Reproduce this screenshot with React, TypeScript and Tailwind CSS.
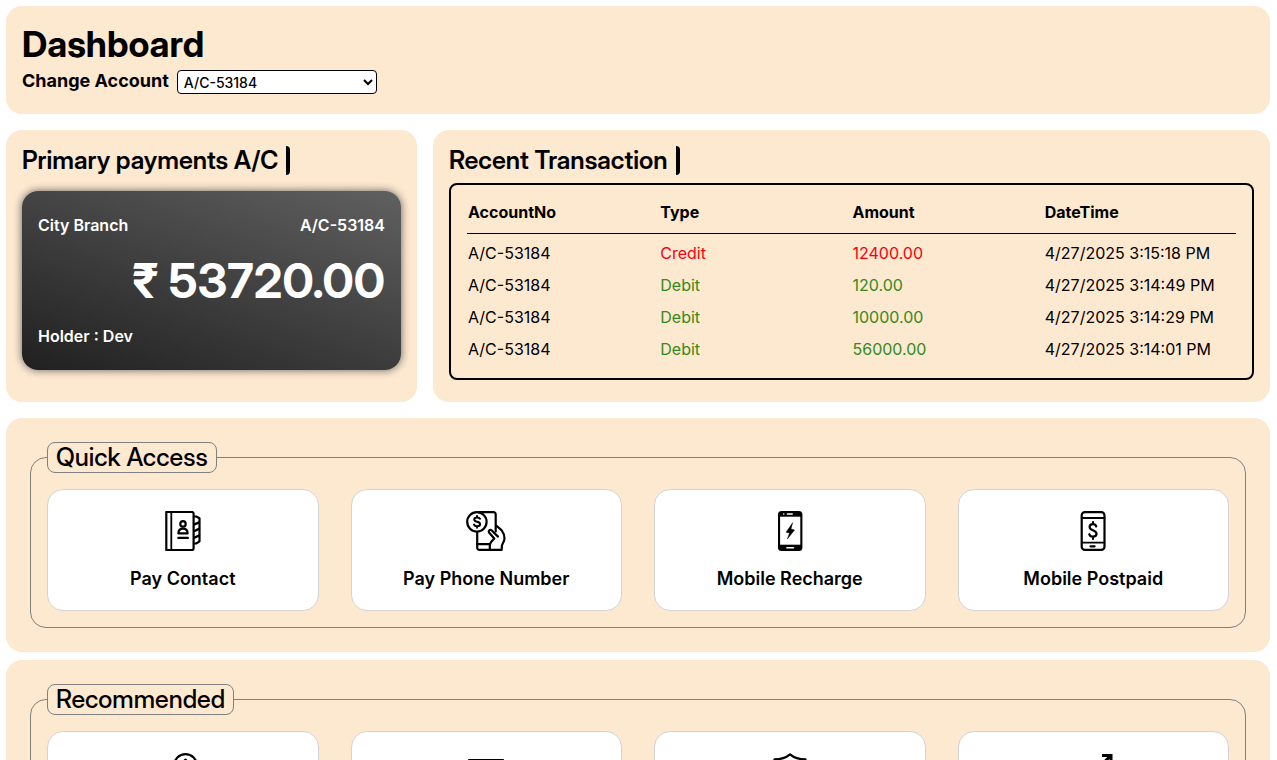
import type { ReactNode } from "react";

type Transaction = { account: string; type: "Credit" | "Debit"; amount: string; date: string };

const transactions: Transaction[] = [
  { account: "A/C-53184", type: "Credit", amount: "12400.00", date: "4/27/2025 3:15:18 PM" },
  { account: "A/C-53184", type: "Debit", amount: "120.00", date: "4/27/2025 3:14:49 PM" },
  { account: "A/C-53184", type: "Debit", amount: "10000.00", date: "4/27/2025 3:14:29 PM" },
  { account: "A/C-53184", type: "Debit", amount: "56000.00", date: "4/27/2025 3:14:01 PM" },
];

function Icon({ children }: { children: ReactNode }) {
  return (
    <svg
      viewBox="0 0 40 40"
      className="size-10"
      fill="none"
      stroke="#000"
      strokeWidth="2.2"
      strokeLinecap="round"
      strokeLinejoin="round"
      aria-hidden="true"
    >
      {children}
    </svg>
  );
}

const ContactBook = () => (
  <Icon>
    <path d="M3.3 1h25.5a1.8 1.8 0 0 1 1.8 1.8v34.4a1.8 1.8 0 0 1-1.8 1.8H3.3z" />
    <path d="M8.3 1v38" strokeWidth="1.8" />
    <path d="M31 5.5h2.2l3.3 1.8v23l-3.3 2.2H31" />
    <path d="M31.5 13.3l4.5-2M31.5 20l4.5-2.2M31.5 26.7l4.5-2.2" strokeWidth="2.4" />
    <circle cx="20" cy="12.9" r="2.7" />
    <path d="M15.4 22.4c0-3 2-4.7 4.6-4.7s4.6 1.7 4.6 4.7z" />
    <path d="M15.3 26.9h9.6" />
  </Icon>
);

const PayPhone = () => (
  <Icon>
    <circle cx="10.9" cy="10.8" r="9.7" />
    <path d="M14 7.8c-.5-1-1.6-1.4-3-1.4-1.7 0-2.8.8-2.8 2.1 0 3 5.9 1.5 5.9 4.6 0 1.4-1.3 2.2-3 2.2-1.6 0-2.7-.6-3.1-1.7M11 4.9v1.5M11 15.3v1.5" strokeWidth="2" />
    <path d="M13 1.2h14.5a2.2 2.2 0 0 1 2.2 2.2v17M11.2 21.8v14.9a2.2 2.2 0 0 0 2.3 2.2h22.2l.2-4c.2-2 2.6-4.6 2.6-7.5 0-3-1-5.6-2.8-8L29.7 14" />
    <path d="M11.2 33.2h13M32 25.6l-6.5-6.3c-1.4-1.3-3.6.5-2.5 2.2l5.3 6-3 3.3c-1.2 1.4-1.5 2.8-1.5 4.2V38.5" />
  </Icon>
);

const Recharge = () => (
  <Icon>
    <rect x="8" y="0" width="24.4" height="40" rx="3.5" fill="#000" stroke="none" />
    <path d="M10.1 5.7h20.2v28H10.1z" fill="#fff" stroke="none" />
    <path d="M17.4 3.1h4.8M13.7 3.1h.1M16.9 36.8h6.6" stroke="#fff" strokeWidth="1.5" />
    <path d="M22.5 12l-6.4 9.2 3.5.8-2.2 5.9 7.1-8.9-3.4-1z" fill="#000" strokeWidth="0.5" />
  </Icon>
);

const Postpaid = () => (
  <Icon>
    <rect x="8.7" y="1.1" width="22.8" height="37.8" rx="3.2" />
    <path d="M8.7 7h22.8M8.7 31.6h22.8" strokeWidth="1.8" />
    <path d="M17.4 35.3h4.2" />
    <path d="M23.2 15.4c-.4-1.6-1.6-2.3-3.3-2.3-2 0-3.3 1-3.3 2.8 0 4.1 6.9 2.5 6.9 6.9 0 1.8-1.5 2.9-3.6 2.9-1.9 0-3.2-.9-3.6-2.5M20 11v2M20 25.7v2.2" />
  </Icon>
);

const Coin = () => (
  <Icon>
    <circle cx="22.5" cy="12.7" r="11.5" />
    <path d="M22.5 6.5v12M19.5 9.5l3-3 3 3" strokeWidth="2" />
    <path d="M4 28v10.5h27l5-8" />
  </Icon>
);

const Bank = () => (
  <Icon>
    <rect x="2.8" y="6.8" width="34.4" height="26" strokeWidth="1.6" />
    <path d="M3 14h34M8 26h8" />
  </Icon>
);

const Shield = () => (
  <Icon>
    <path d="M20 1.4c-4.5 3.8-9.5 5-15.5 5V19c0 9 6 16 15.5 20 9.5-4 15.5-11 15.5-20V6.4c-6 0-11-1.2-15.5-5z" />
    <path d="M13 20l5 5 9-10" />
  </Icon>
);

const Growth = () => (
  <Icon>
    <path d="M29 2.5h9V11M37.5 3L24 16l-6-5L4 25" strokeWidth="3" strokeLinecap="butt" strokeLinejoin="miter" />
    <path d="M5 38v-7M16 38V22M27 38V25M37 38V18" />
  </Icon>
);

type Action = { name: string; icon: ReactNode; iconOnly?: boolean };

const quickAccess: Action[] = [
  { name: "Pay Contact", icon: <ContactBook /> },
  { name: "Pay Phone Number", icon: <PayPhone /> },
  { name: "Mobile Recharge", icon: <Recharge /> },
  { name: "Mobile Postpaid", icon: <Postpaid /> },
];

const recommended: Action[] = [
  { name: "Savings", icon: <Coin />, iconOnly: true },
  { name: "Cards", icon: <Bank />, iconOnly: true },
  { name: "Insurance", icon: <Shield />, iconOnly: true },
  { name: "Investments", icon: <Growth />, iconOnly: true },
];

function Heading({ children }: { children: ReactNode }) {
  return (
    <h2 className="flex">
      <span className="rounded-r-sm border-r-4 border-black pr-2 font-['Inter_Display','Inter',sans-serif] text-[25px] leading-[29px] font-semibold">
        {children}
      </span>
    </h2>
  );
}

function ActionGroup({ title, items }: { title: string; items: Action[] }) {
  return (
    <section className="rounded-2xl bg-[#fde8d0] p-6">
      <fieldset className="min-w-0 rounded-2xl border border-[#808080] p-4">
        <legend className="rounded-lg border border-[#808080] px-2 font-['Inter_Display','Inter',sans-serif] text-[25px] leading-[29px] font-medium">
          {title}
        </legend>
        <div className="grid grid-cols-4 gap-8">
          {items.map((item) => (
            <button
              key={item.name}
              type="button"
              aria-label={item.name}
              className="flex flex-col items-center gap-4 rounded-2xl border border-[#d3d3d3] bg-white pt-[21px] pb-5 text-lg leading-[23px] font-semibold"
            >
              {item.icon}
              {item.iconOnly ? null : item.name}
            </button>
          ))}
        </div>
      </fieldset>
    </section>
  );
}

export default function App() {
  return (
    <main className="py-1.5 pr-[7px] pl-1.5 font-['Inter',sans-serif] text-black">
      <header className="rounded-2xl bg-[#fde8d0] px-4 pt-4 pb-5">
        <h1 className="font-['Inter_Display','Inter',sans-serif] text-4xl leading-[44px] font-bold">Dashboard</h1>
        <div className="mt-1 flex items-start gap-2">
          <label htmlFor="account" className="text-lg leading-[22px] font-bold">
            Change Account
          </label>
          <select
            id="account"
            className="h-6 w-50 rounded-sm border border-black bg-white px-0.5 text-sm font-medium"
          >
            <option>A/C-53184</option>
          </select>
        </div>
      </header>

      <div className="my-4 grid grid-cols-[411fr_837fr] gap-4">
        <section className="rounded-2xl bg-[#fde8d0] p-4">
          <Heading>Primary payments A/C</Heading>
          <div className="mt-4 flex flex-col gap-4 rounded-2xl bg-linear-[20deg,#202020,#606060] px-4 py-6 leading-5 font-semibold text-white shadow-[0_0_8px_#606060]">
            <div className="flex justify-between">
              <span>City Branch</span>
              <span>A/C-53184</span>
            </div>
            <p className="text-right font-['Inter_Display','Inter',sans-serif] text-5xl leading-[59px] font-bold">
              ₹ 53720.00
            </p>
            <p>Holder : Dev</p>
          </div>
        </section>

        <section className="rounded-2xl bg-[#fde8d0] px-4 pt-4 pb-[22px]">
          <Heading>Recent Transaction</Heading>
          <div className="mt-2 rounded-lg border-2 border-black p-4">
            <table className="w-full table-fixed border-separate border-spacing-0 text-left">
              <thead>
                <tr>
                  {["AccountNo", "Type", "Amount", "DateTime"].map((name) => (
                    <th key={name} className="border-b border-black px-px pb-2.5 leading-[22px] font-bold">
                      {name}
                    </th>
                  ))}
                </tr>
              </thead>
              <tbody>
                {transactions.map((row) => {
                  const tone = row.type === "Credit" ? "text-[#f5000f]" : "text-[#348a20]";
                  return (
                    <tr key={row.date}>
                      <td className="px-px pt-2 pb-0.5 leading-[22px]">{row.account}</td>
                      <td className={`px-px pt-2 pb-0.5 leading-[22px] ${tone}`}>{row.type}</td>
                      <td className={`px-px pt-2 pb-0.5 leading-[22px] ${tone}`}>{row.amount}</td>
                      <td className="px-px pt-2 pb-0.5 leading-[22px]">{row.date}</td>
                    </tr>
                  );
                })}
              </tbody>
            </table>
          </div>
        </section>
      </div>

      <div className="flex flex-col gap-2">
        <ActionGroup title="Quick Access" items={quickAccess} />
        <ActionGroup title="Recommended" items={recommended} />
      </div>
    </main>
  );
}
